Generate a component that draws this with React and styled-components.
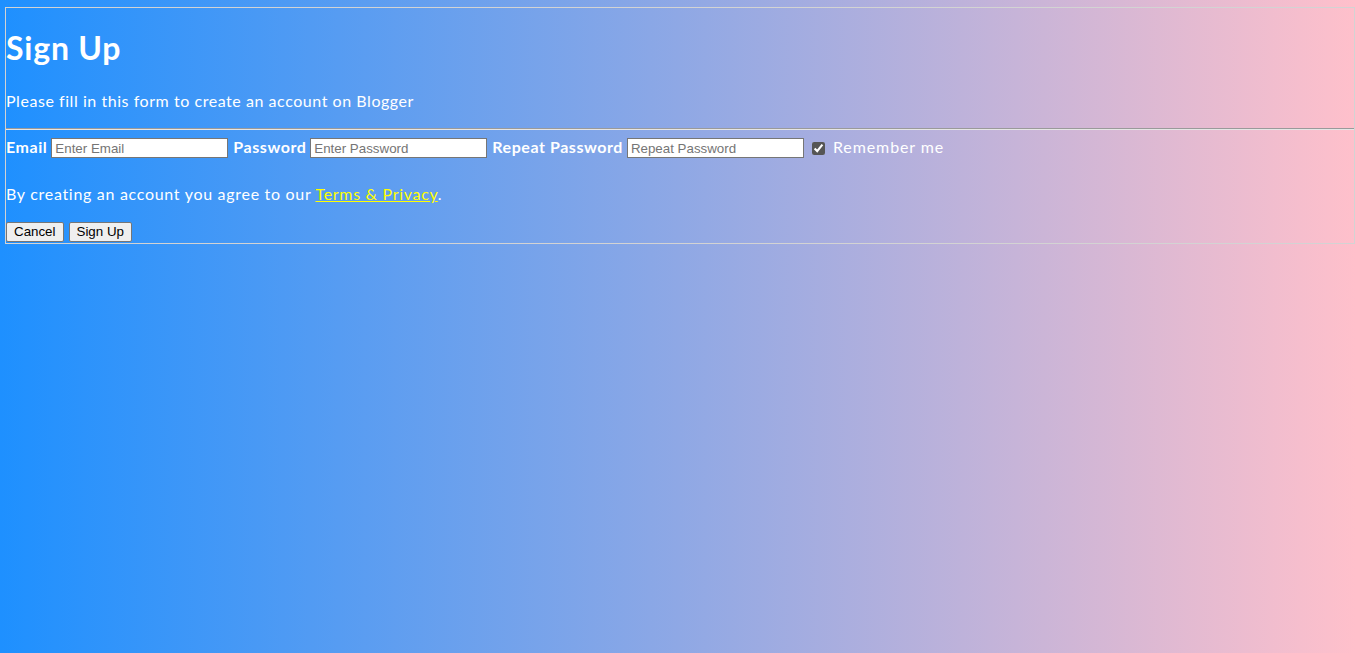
import React from "react";
import styled, { createGlobalStyle } from "styled-components";

const GlobalStyle = createGlobalStyle`
  html, body {
    margin: 0;
    min-height: 100%;
  }

  body {
    min-height: 100vh;
    background: linear-gradient(to right, #1e90ff, #ffc0cb);
    font-family: "Lato", "Open Sans", sans-serif;
    letter-spacing: 0.55px;
    color: white;
  }
`;

const App = () => {
  return (
    <>
      <GlobalStyle />
      <Container>
        <Title>Sign Up</Title>
        <Subtitle>Please fill in this form to create an account on Blogger</Subtitle>
        <Divider />

        <FieldRow>
          <Label htmlFor="email">Email</Label>
          <Input id="email" type="text" placeholder="Enter Email" />
          <Label htmlFor="psw" $lead>Password</Label>
          <Input id="psw" type="password" placeholder="Enter Password" />
          <Label htmlFor="psw-repeat" $lead>Repeat Password</Label>
          <Input id="psw-repeat" type="password" placeholder="Repeat Password" />
          <CheckLabel>
            <Checkbox type="checkbox" defaultChecked />
            Remember me
          </CheckLabel>
        </FieldRow>

        <Agree>
          By creating an account you agree to our <TermsLink href="#">Terms &amp; Privacy</TermsLink>.
        </Agree>

        <ButtonRow>
          <Button type="button">Cancel</Button>
          <Button type="submit">Sign Up</Button>
        </ButtonRow>
      </Container>
    </>
  );
};

export default App;

const Container = styled.form`
  margin: 7px 1px 0 5px;
  border: 1px solid #d3d3d3;
  padding: 0 0 1px;
`;

const Title = styled.h1`
  margin: 20px 0 0;
  font-size: 32px;
  line-height: 40px;
  font-weight: 700;
  letter-spacing: 0.8px;
`;

const Subtitle = styled.p`
  margin: 23px 0 0;
  font-size: 16px;
  line-height: 20px;
`;

const Divider = styled.hr`
  margin: 17px 0 0;
  border: none;
  border-top: 1px solid #9a9a9a;
  border-bottom: 1px solid #e6e6e6;
`;

const FieldRow = styled.div`
  margin-top: 8px;
  height: 20px;
  display: flex;
  align-items: center;
`;

const Label = styled.label`
  font-size: 16px;
  line-height: 20px;
  padding-bottom: 3px;
  font-weight: 700;
  margin-left: ${(p) => (p.$lead ? "5px" : "0")};
  margin-right: 4px;
`;

const Input = styled.input`
  box-sizing: border-box;
  width: 177px;
  height: 20px;
  padding: 1px 3px;
  border: 1px solid #767676;
  background: white;
  font-family: "Liberation Sans", Arial, sans-serif;
  font-size: 13.33px;
  letter-spacing: normal;
  color: black;

  &::placeholder {
    color: #757575;
  }
`;

const CheckLabel = styled.label`
  display: flex;
  align-items: center;
  margin-left: 8px;
  font-size: 16px;
  line-height: 20px;
  padding-bottom: 3px;
  letter-spacing: 0.9px;
`;

const Checkbox = styled.input`
  width: 13px;
  height: 13px;
  margin: 3px 8px 0 0;
  accent-color: #555555;
`;

const Agree = styled.p`
  margin: 26px 0 0;
  font-size: 16px;
  line-height: 20px;
  letter-spacing: 0.7px;
`;

const TermsLink = styled.a`
  color: #ffff00;
  text-decoration: underline;
`;

const ButtonRow = styled.div`
  margin-top: 18px;
  display: flex;
  gap: 5px;
`;

const Button = styled.button`
  height: 20px;
  padding: 1px 7px;
  border: 1px solid #767676;
  border-radius: 2px;
  background: #efefef;
  color: black;
  font-family: "Liberation Sans", Arial, sans-serif;
  font-size: 13.33px;
  letter-spacing: normal;
  line-height: 16px;
`;
